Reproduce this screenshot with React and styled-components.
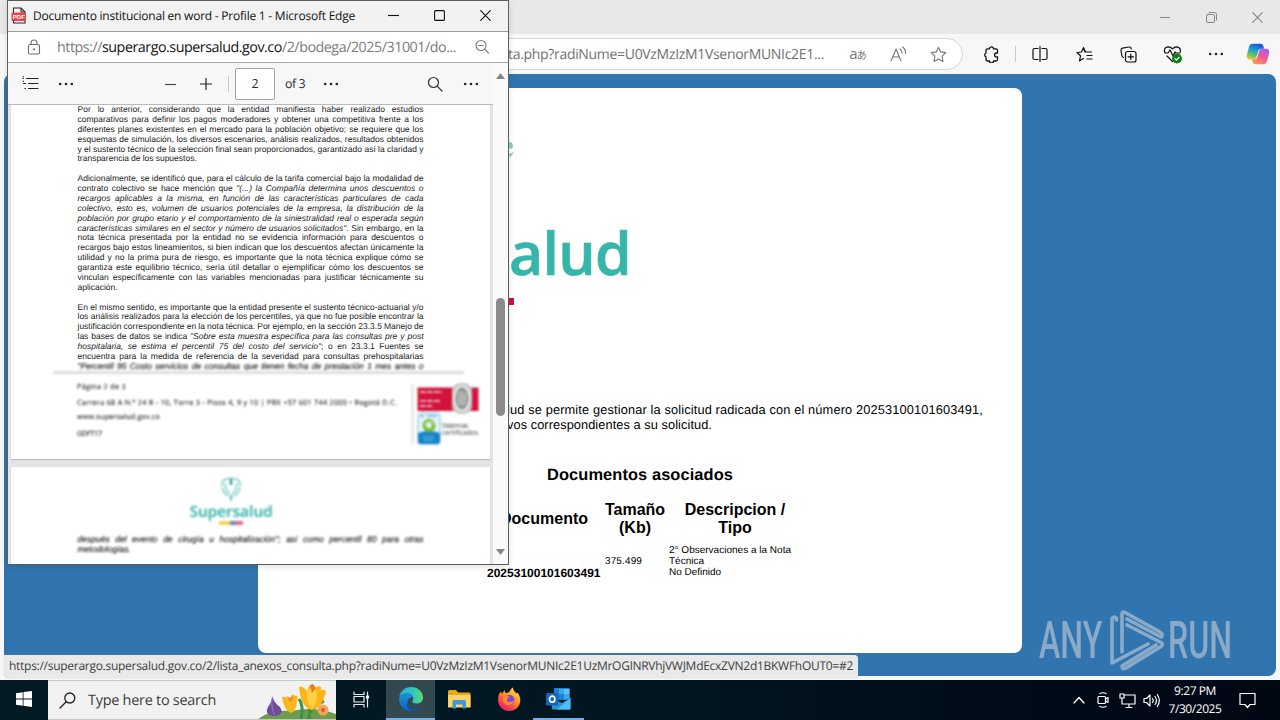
import React, { useLayoutEffect, useRef } from "react";
import styled, { createGlobalStyle } from "styled-components";

const Global = createGlobalStyle`
  * { box-sizing: border-box; }
  html, body { margin: 0; padding: 0; }
  body { width: 1280px; height: 720px; overflow: hidden; font-family: "Open Sans", "Noto Sans", sans-serif; }
  svg { display: block; flex: none; }
`;

/* Label whose tracking is adjusted so that it fills a given width */
const FitSpan = styled.span`
  display: inline-block;
  white-space: pre;
  flex: none;
  text-rendering: geometricPrecision;
`;
function Fit({ w, children, className }) {
  const ref = useRef(null);
  useLayoutEffect(() => {
    const el = ref.current;
    el.style.letterSpacing = "0px";
    const n = el.textContent.length;
    const natural = el.getBoundingClientRect().width;
    el.style.letterSpacing = `${(w - natural) / n}px`;
  }, [w]);
  return <FitSpan ref={ref} className={className}>{children}</FitSpan>;
}

const Screen = styled.div`
  position: relative;
  width: 1280px;
  height: 720px;
  display: flex;
  flex-direction: column;
  background: #f7f7f7;
  overflow: hidden;
`;

/* ---------- main browser window ---------- */
const TitleBar = styled.div`
  height: 34px;
  flex: none;
  background: #e8e8e8;
  display: flex;
  justify-content: flex-end;
`;
const WinButton = styled.div`
  width: 46px;
  height: 34px;
  display: flex;
  align-items: center;
  justify-content: center;
`;
const Toolbar = styled.div`
  height: 40px;
  flex: none;
  display: flex;
  align-items: center;
  background: #f7f7f7;
`;
const OmniBox = styled.div`
  width: 863px;
  height: 32px;
  margin: 0 6px 0 100px;
  padding: 0 4px 0 407px;
  border: 1px solid #d9d3d6;
  border-radius: 16px;
  background: #fff;
  display: flex;
  align-items: center;
  color: #717171;
  font-size: 14px;
`;
const UrlTail = styled(Fit)`
  margin-right: auto;
`;
const Slot = styled.div`
  width: ${(p) => p.$w || 44}px;
  height: 32px;
  flex: none;
  display: flex;
  align-items: center;
  justify-content: center;
`;
const Divider = styled.div`
  width: 1px;
  height: 16px;
  background: #c9c9c9;
  margin: ${(p) => p.$m || "0 2px"};
`;
const Viewport = styled.div`
  height: 602px;
  flex: none;
  margin: 0 4px 4px;
  padding: 14px 0 0 254px;
  border-radius: 8px;
  background: #3175b0;
`;
const Card = styled.div`
  width: 764px;
  height: 565px;
  border-radius: 8px;
  background: #fff;
  overflow: hidden;
  font-family: "Liberation Sans", Arial, sans-serif;
  color: #000;
  display: flex;
  flex-direction: column;
`;
const Brand = styled.div`
  height: 312px;
  padding: 48px 0 0 251px;
  filter: blur(0.7px);
`;
const BrandName = styled.div`
  margin-top: 44px;
  height: 64px;
  line-height: 64px;
  font-family: "Open Sans", sans-serif;
  font-weight: 600;
  font-size: 59px;
  color: #36b6aa;
  -webkit-text-stroke: 0.6px #36b6aa;
`;
const BrandRule = styled.div`
  width: 5px;
  height: 7px;
  margin-top: 14px;
  background: #d0103a;
`;
const Intro = styled.div`
  padding-left: 249px;
  font-size: 12.8px;
  line-height: 15px;
  height: 64px;
  margin-top: 2px;
`;
const DocsTitle = styled.div`
  padding-left: 289px;
  height: 35px;
  line-height: 17px;
  font-size: 16.4px;
  font-weight: 700;
`;
const DocsTable = styled.div`
  margin-left: 229px;
  display: grid;
  grid-template-columns: 114px 60px 132px;
  column-gap: 4px;
  row-gap: 7px;
`;
const HeadCell = styled.div`
  height: 36px;
  display: flex;
  flex-direction: column;
  justify-content: center;
  align-items: center;
  font-size: 16px;
  line-height: 18px;
  font-weight: 700;
`;
const Cell = styled.div`
  height: 34px;
  display: flex;
  flex-direction: column;
  justify-content: ${(p) => p.$at || "center"};
  align-items: flex-start;
  font-size: 10px;
  line-height: 11px;
`;
const DocLink = styled(Fit)`
  font-size: 12px;
  font-weight: 700;
  line-height: 10px;
`;

/* ---------- popup window ---------- */
const Popup = styled.div`
  position: absolute;
  left: 7px;
  top: 0;
  width: 502px;
  height: 565px;
  border: 1px solid #5d5d5d;
  background: #fff;
  display: flex;
  flex-direction: column;
  overflow: hidden;
  box-shadow: 0 2px 6px rgba(0, 0, 0, 0.12);
`;
const PopTitle = styled.div`
  height: 30px;
  flex: none;
  padding: 0 0 2px 3px;
  background: #f2f2f2;
  display: flex;
  align-items: center;
  font-size: 12px;
  color: #111;
`;
const PopLabel = styled(Fit)`
  margin: 0 auto 0 6px;
`;
const PopAddress = styled.div`
  height: 32px;
  flex: none;
  border-top: 1px solid #9a9a9a;
  border-bottom: 1px solid #a8a8a8;
  display: flex;
  align-items: center;
  padding: 0 4px;
  font-size: 14.3px;
  color: #7b7b7b;
  b { font-weight: 400; color: #111; }
`;
const PopUrl = styled(Fit)`
  margin: 0 auto 0 1px;
`;
const PopBody = styled.div`
  flex: 1;
  min-height: 0;
  display: flex;
`;
const PdfSide = styled.div`
  width: 485px;
  display: flex;
  flex-direction: column;
  background: #e4e4e4;
`;
const PdfBar = styled.div`
  height: 42px;
  flex: none;
  border-bottom: 1px solid #b9b9b9;
  background: #f7f7f7;
  display: flex;
  align-items: center;
  padding-left: 4px;
  font-size: 12.4px;
  color: #2b2b2b;
`;
const PageInput = styled.div`
  width: 40px;
  height: 32px;
  border: 1px solid #a3a3a3;
  border-radius: 2px;
  background: #fff;
  display: flex;
  align-items: center;
  justify-content: center;
  margin: 0 10px 0 6px;
`;
const Spacer = styled.div`
  width: ${(p) => p.$w}px;
  flex: none;
`;
const ScrollTrack = styled.div`
  width: 15px;
  background: #fafafa;
  display: flex;
  flex-direction: column;
  align-items: center;
  padding: 10px 0 8px;
`;
const Thumb = styled.div`
  width: 9px;
  height: 118px;
  margin: 218px 0 auto;
  border-radius: 5px;
  background: #8b8b8b;
`;
const Page = styled.div`
  width: 479px;
  height: ${(p) => p.$h}px;
  flex: none;
  margin: 0 0 ${(p) => p.$gap || 0}px 3px;
  background: #fff;
  box-shadow: 0 1px 1px #bdbdbd;
  overflow: hidden;
  font-family: "Liberation Sans", Arial, sans-serif;
  color: #1c1c1c;
`;
const Copy = styled.div`
  width: 346px;
  margin-left: 66.5px;
  font-size: 8.5px;
  word-spacing: -0.25px;
  text-rendering: geometricPrecision;
`;
const Line = styled.div`
  height: 9.88px;
  line-height: 9.88px;
  white-space: nowrap;
  text-align: justify;
  text-align-last: ${(p) => (p.$last ? "left" : "justify")};
`;
const SoftLine = styled(Line)`
  filter: blur(0.95px);
  color: #2a2a2a;
  font-style: italic;
  -webkit-text-stroke: 0.2px #2a2a2a;
`;
const FootRule = styled.div`
  width: 411px;
  height: 3px;
  margin: -1px 0 0 42px;
  background: #dedede;
  filter: blur(0.8px);
`;
const Foot = styled.div`
  display: flex;
  margin: 8px 0 0 66px;
  font-family: "Open Sans", sans-serif;
  font-size: 7.2px;
  color: #333;
`;
const FootText = styled.div`
  width: 333px;
  display: flex;
  flex-direction: column;
  filter: blur(1.2px);
  line-height: 8px;
  -webkit-text-stroke: 0.15px #333;
`;
const FootItem = styled.div`
  height: ${(p) => p.$h}px;
`;
const PdfLogo = styled.div`
  display: flex;
  flex-direction: column;
  align-items: center;
  padding: 10px 39px 0 0;
  height: 68px;
  filter: blur(1px);
`;
const PdfLogoName = styled.div`
  font-family: "Open Sans", sans-serif;
  font-weight: 700;
  font-size: 15.6px;
  line-height: 19px;
  color: #4fbdb3;
`;
const PdfLogoRule = styled.div`
  width: 24px;
  height: 4px;
  background: linear-gradient(90deg, #f4d35c 0 46%, #7a83b4 46% 72%, #dd6f93 72%);
`;

/* ---------- overlays ---------- */
const StatusBubble = styled.div`
  position: absolute;
  left: 4px;
  top: 655px;
  width: 854px;
  height: 23px;
  padding: 0 0 2px 5px;
  border-radius: 0 4px 0 5px;
  background: #e9e9ea;
  box-shadow: 0 0 1px #999;
  display: flex;
  align-items: center;
  font-size: 12px;
  color: #3e3e3e;
`;
const Watermark = styled.div`
  position: absolute;
  left: 1039px;
  top: 610px;
  height: 62px;
  display: flex;
  align-items: center;
  opacity: 0.68;
`;
const WatermarkWord = styled.div`
  width: ${(p) => p.$w}px;
  font-family: Roboto, sans-serif;
  font-weight: 500;
  font-size: 51px;
  line-height: 62px;
  color: #b4c3d2;
  white-space: nowrap;
  transform: scaleX(${(p) => p.$squeeze});
  transform-origin: 0 50%;
`;

/* ---------- taskbar ---------- */
const Taskbar = styled.div`
  height: 40px;
  flex: none;
  display: flex;
  align-items: stretch;
  background: linear-gradient(90deg, #021a24, #011620 50%, #000a16 85%, #000814);
  color: #fff;
`;
const TaskCell = styled.div`
  width: ${(p) => p.$w || 49}px;
  display: flex;
  align-items: center;
  justify-content: center;
  background: ${(p) => (p.$active ? "#34484f" : "transparent")};
  border-bottom: 2px solid ${(p) => (p.$run ? "#76b0e6" : "transparent")};
`;
const SearchBox = styled.div`
  width: 288px;
  background: #f2f2f2;
  border: 1px solid #c2c6c8;
  border-width: 1px 0;
  display: flex;
  align-items: center;
  padding-left: 11px;
  color: #3d3d3d;
  font-size: 14.4px;
`;
const SearchLabel = styled(Fit)`
  margin: 0 auto 0 12px;
`;
const Tray = styled.div`
  margin-left: auto;
  display: flex;
  align-items: center;
`;
const Clock = styled.div`
  width: 66px;
  padding-right: 2px;
  display: flex;
  flex-direction: column;
  align-items: center;
  font-size: 12px;
  line-height: 18px;
`;

/* ---------- icons ---------- */
const Ico = ({ s = 16, vb = 16, c = "#222", sw = 1.1, children }) => (
  <svg width={s} height={s} viewBox={`0 0 ${vb} ${vb}`} fill="none" stroke={c} strokeWidth={sw} strokeLinecap="round" strokeLinejoin="round">
    {children}
  </svg>
);
const Dots = () => (
  <svg width="16" height="4" viewBox="0 0 16 4" fill="#222">
    <circle cx="2.2" cy="2" r="1.3" /><circle cx="8" cy="2" r="1.3" /><circle cx="13.8" cy="2" r="1.3" />
  </svg>
);
const Minus = ({ c = "#777", w = 10 }) => (
  <svg width={w} height="10"><path d={`M0 5.5H${w}`} stroke={c} strokeWidth="1.1" /></svg>
);
const Cross = ({ c }) => (
  <Ico s={11} vb={11} c={c} sw={1.1}><path d="M.7.7l9.6 9.6M10.3.7L.7 10.3" /></Ico>
);
const STAR = "M8.5 1.2l2.2 4.7 5.1.7-3.7 3.6.9 5.2-4.5-2.5L4 15.4l.9-5.2L1.2 6.6l5.1-.7z";
const Copilot = () => (
  <svg width="24" height="22" viewBox="0 0 24 22">
    <defs>
      <linearGradient id="cpa" x1="0.6" y1="0" x2="0.2" y2="1">
        <stop offset="0" stopColor="#1c52d8" /><stop offset=".35" stopColor="#1598da" /><stop offset=".7" stopColor="#5cc46a" /><stop offset="1" stopColor="#ffc52b" />
      </linearGradient>
      <linearGradient id="cpb" x1="0.8" y1="0" x2="0.2" y2="1">
        <stop offset="0" stopColor="#a95cf0" /><stop offset=".5" stopColor="#ee5a9a" /><stop offset="1" stopColor="#ff9a45" />
      </linearGradient>
    </defs>
    <path d="M7 .8h7.6c1.6 0 2.3 1 2.8 2.5l.8 2.4h-2.6c-2 0-2.9.8-3.5 2.8l-1.7 5.6c-.5 1.6-1.4 2.4-3 2.4H4C1 16.500.2 14 1 11.200L3 4C3.600 1.800 4.800.8 7 .8z" fill="url(#cpa)" />
    <path d="M17 21.200H9.400c-1.600 0-2.300-1-2.800-2.500l-.8-2.200h2.200c2 0 2.900-1 3.500-2.900l1.700-5.500c.5-1.600 1.400-2.400 3-2.400H20c3 0 3.800 2.300 3 5.100L21 18c-.6 2.200-1.800 3.200-4 3.200z" fill="url(#cpb)" />
  </svg>
);
const PdfFile = () => (
  <svg width="16" height="17" viewBox="0 0 16 17">
    <path d="M2.500 1h7.500l4 4v11H2.500z" fill="#fff" stroke="#222" strokeWidth="1.100" />
    <path d="M10 1v4h4" fill="none" stroke="#222" strokeWidth="1.100" />
    <rect x="0.500" y="5.500" width="14.500" height="8.500" rx="1" fill="#e8434a" />
    <text x="1.800" y="12" fontSize="6" fontWeight="700" fontFamily="Liberation Sans" fill="#fff" textLength="12">PDF</text>
  </svg>
);
const SoftSvg = styled.svg`
  filter: blur(0.8px);
`;
const Certificates = () => (
  <SoftSvg width="70" height="64" viewBox="0 0 70 64">
    <rect x="1" y="2" width="3" height="60" fill="#e9e9e9" />
    <rect x="7.500" y="5.500" width="61" height="23.500" fill="#d2143c" />
    <path d="M10 10h22M10 19h20M10 24h12" stroke="#f0a3b3" strokeWidth="2" strokeDasharray="6 1" />
    <rect x="42" y="1" width="20" height="31" rx="8" fill="#c9cbc8" />
    <ellipse cx="52" cy="16.500" rx="7.500" ry="12" fill="#8d938f" stroke="#f4f4f4" strokeWidth="1.600" />
    <path d="M49 10v13M52 9v15M55 11v12" stroke="#dfe3e0" strokeWidth="1.200" />
    <rect x="8" y="31" width="22" height="31" rx="2.500" fill="#e6f4fb" stroke="#76bde5" />
    <path d="M8 51q11-4 22 0v8.500q0 2.500-2.500 2.500h-17q-2.500 0-2.500-2.500z" fill="#1684c8" />
    <path d="M13 55h11M14 58h9" stroke="#7bc3e8" />
    <path d="M10 34h4M17 34h10" stroke="#5db3e3" strokeWidth="1.400" />
    <circle cx="19" cy="43.500" r="4.600" fill="none" stroke="#7cbd2c" strokeWidth="3.800" />
    <path d="M15 43q5-6 9-1" fill="none" stroke="#e6f4fb" strokeWidth="1.200" />
    <text x="32" y="46" fontSize="6.500" fill="#333" fontFamily="Open Sans" textLength="26">Sistemas</text>
    <text x="32" y="53" fontSize="6.500" fill="#333" fontFamily="Open Sans" textLength="36">certificados</text>
  </SoftSvg>
);
const Emblem = () => (
  <svg width="22" height="25" viewBox="0 0 22 25" fill="none" stroke="#86d0c9" strokeWidth="1.600">
    <path d="M2 9Q1 2 8 1.500M14 1.500Q21 2 20 9M2 10Q3 16 8 19M20 10Q19 16 14 19M5 6q1 9 5 11M17 6q-1 9-5 11" fill="#e0f3f0" />
    <path d="M6 2.500Q11 0 16 2.500" />
    <path d="M11 2v6" stroke="#2f978e" strokeWidth="2.400" />
    <path d="M11 18v6M9.500 20h3" stroke="#58b8af" />
  </svg>
);
const Flowers = () => (
  <svg width="78" height="37" viewBox="0 0 78 37">
    <path d="M0 37Q12 27 34 29Q56 24 78 32V37z" fill="#6e9c4d" />
    <path d="M43 37Q46 24 41 17M52 37Q50 28 54 17M50 37Q52 26 66 19" stroke="#3c9143" strokeWidth="3" fill="none" />
    <path d="M14 14Q14 20 10 25Q6 33 16 34Q27 33 22 25Q16 21 14 14z" fill="#6c4c9c" />
    <path d="M14 17Q13 27 17 33" stroke="#9a7bc4" fill="none" />
    <path d="M24 15Q28 14 32 17Q34 10 37 14Q41 12 39 20Q38 30 33 31Q26 29 24 15z" fill="#f8b820" />
    <path d="M41 5Q44 3 49 9Q52-2 57 6Q64 1 63 8Q70 7 67 13Q64 26 54 28Q43 26 41 5z" fill="#fbb517" />
    <path d="M49 8Q48 20 54 27Q62 18 57 6" fill="#fdd247" />
    <path d="M52 3l3-1 3 4-4 5z" fill="#ee7820" />
    <path d="M29 14l3 2 3-2-1 5h-3z" fill="#f08820" />
    <circle cx="65" cy="28" r="5.500" fill="#f3a35a" /><circle cx="65" cy="28" r="2" fill="#e05b25" />
  </svg>
);
const EdgeIcon = () => (
  <svg width="26" height="26" viewBox="0 0 26 26">
    <defs>
      <linearGradient id="ea" x1="0" y1="0.300" x2="1" y2="0.300"><stop offset="0" stopColor="#2aa7e6" /><stop offset=".6" stopColor="#30c8c0" /><stop offset="1" stopColor="#62dc68" /></linearGradient>
      <linearGradient id="eb" x1="0" y1="0" x2="0" y2="1"><stop offset="0" stopColor="#1b8fdc" /><stop offset="1" stopColor="#1462b8" /></linearGradient>
    </defs>
    <path d="M1.200 11C2.400 5 7.200 1 13 1c7 0 12 5 12 10.500 0 4-3 6-6.500 6-3 0-4.600-1-4.200-2.200.4-1 .9-1.600.9-3C15 9.500 12.500 7.500 9 7.500S2.800 9 1.200 11z" fill="url(#ea)" />
    <path d="M1 13c0-3 3.500-5.500 8-5.500 3 0 5.600 1.600 6 4.200-1.200-1-5.500.300-5.500 4.500 0 4.500 4.500 7.500 9.500 6.300-2 1.700-4 2.500-6.300 2.500C6 25 1 19.600 1 13z" fill="url(#eb)" />
    <path d="M9.500 16c0 4.800 5 8 10.300 5.600 1.700-.8 3 .200 2 1.200C19 25.500 14 26 10.500 23 8 21 8.300 18 9.500 16z" fill="#145098" />
  </svg>
);
const FolderIcon = () => (
  <svg width="23" height="20" viewBox="0 0 23 20">
    <path d="M0 2.500Q0 1 1.500 1H8l2 2.500h11.500Q22.500 3.500 22.500 5V18H0z" fill="#e8a824" />
    <path d="M0 6h22.500v12.500H0z" fill="#fbd466" />
    <path d="M4.500 19.500v-7q0-1.500 1.500-1.500h10.500q1.500 0 1.500 1.500v7h-3.500v-4h-6.500v4z" fill="#3f97d4" />
  </svg>
);
const FirefoxIcon = () => (
  <svg width="24" height="25" viewBox="0 0 24 25">
    <defs>
      <linearGradient id="ff" x1="0.800" y1="0" x2="0.200" y2="1"><stop offset="0" stopColor="#ffe23c" /><stop offset=".4" stopColor="#ff9a22" /><stop offset=".75" stopColor="#fb3d4e" /><stop offset="1" stopColor="#dd1480" /></linearGradient>
    </defs>
    <path d="M1 13C1 9 2 6.500 4 4.500l1 2.500 2.500-4 1 3c2 0 3.500-.5 4.500-2C13.500 2.500 14.500 1 16 .5c0 3 2 4 3.500 6l1-1C22.500 8 23.300 10.500 23.300 13 23.300 19.500 18.500 24 12 24S1 19 1 13z" fill="url(#ff)" />
    <circle cx="12.500" cy="13" r="5" fill="#7a48dc" />
    <path d="M6 9.500c3-1.500 5-.5 7 .5-2 .5-3 1.500-3 3 0 2 4 3 7 .5-.5 5-9 6.500-11 1z" fill="#fb8a2b" />
  </svg>
);
const OutlookIcon = () => (
  <svg width="25" height="22" viewBox="0 0 25 22">
    <path d="M8 0h14.500q1 0 1 1v11H8z" fill="#1f7fd0" />
    <path d="M13 1h5v5h-5zM18 6h5.500v5H18z" fill="#38a8ec" /><path d="M18 1h5.500v5H18z" fill="#56c2f8" />
    <path d="M6 10l10 5 8.500-5v10.500q0 1-1 1H7q-1 0-1-1z" fill="#2a94dc" />
    <path d="M24.500 10L11 21.500h12.500q1 0 1-1z" fill="#50bdf2" />
    <rect x="0" y="5" width="12.500" height="12.500" rx="1" fill="#0f66bd" />
    <ellipse cx="6.200" cy="11.200" rx="2.700" ry="3" fill="none" stroke="#fff" strokeWidth="1.700" />
  </svg>
);

const PARA = [
  ["Por lo anterior, considerando que la entidad manifiesta haber realizado estudios"],
  ["comparativos para definir los pagos moderadores y obtener una competitiva frente a los"],
  ["diferentes planes existentes en el mercado para la población objetivo; se requiere que los"],
  ["esquemas de simulación, los diversos escenarios, análisis realizados, resultados obtenidos"],
  ["y el sustento técnico de la selección final sean proporcionados, garantizado así la claridad y"],
  ["transparencia de los supuestos.", 1],
  ["\u00a0", 1],
  ["Adicionalmente, se identificó que, para el cálculo de la tarifa comercial bajo la modalidad de"],
  [<>contrato colectivo se hace mención que <i>"(...) la Compañía determina unos descuentos o</i></>],
  [<i>recargos aplicables a la misma, en función de las características particulares de cada</i>],
  [<i>colectivo, esto es, volumen de usuarios potenciales de la empresa, la distribución de la</i>],
  [<i>población por grupo etario y el comportamiento de la siniestralidad real o esperada según</i>],
  [<><i>características similares en el sector y número de usuarios solicitados"</i>. Sin embargo, en la</>],
  ["nota técnica presentada por la entidad no se evidencia información para descuentos o"],
  ["recargos bajo estos lineamientos, si bien indican que los descuentos afectan únicamente la"],
  ["utilidad y no la prima pura de riesgo, es importante que la nota técnica explique cómo se"],
  ["garantiza este equilibrio técnico, sería útil detallar o ejemplificar cómo los descuentos se"],
  ["vinculan específicamente con las variables mencionadas para justificar técnicamente su"],
  ["aplicación.", 1],
  ["\u00a0", 1],
  ["En el mismo sentido, es importante que la entidad presente el sustento técnico-actuarial y/o"],
  ["los análisis realizados para la elección de los percentiles, ya que no fue posible encontrar la"],
  ["justificación correspondiente en la nota técnica. Por ejemplo, en la sección 23.3.5 Manejo de"],
  [<>las bases de datos se indica <i>"Sobre esta muestra específica para las consultas pre y post</i></>],
  [<><i>hospitalaria, se estima el percentil 75 del costo del servicio"</i>; o en 23.3.1 Fuentes se</>],
  ["encuentra para la medida de referencia de la severidad para consultas prehospitalarias"],
];

const TranslateGlyph = styled.span`
  font-size: 15px;
  line-height: 18px;
  color: #777;
  small { font-family: "Noto Sans CJK JP", sans-serif; font-size: 10px; margin-left: -1px; }
`;

function MainWindow() {
  return (
    <>
      <TitleBar>
        <WinButton><Minus c="#8a8a8a" /></WinButton>
        <WinButton>
          <Ico s={11} vb={11} c="#858585" sw={1}><rect x="0.500" y="2.500" width="8" height="8" rx="1.500" /><path d="M3 .5h5.500q2 0 2 2V8" /></Ico>
        </WinButton>
        <WinButton><Cross c="#858585" /></WinButton>
      </TitleBar>
      <Toolbar>
        <OmniBox>
          <UrlTail w={316}>ta.php?radiNume=U0VzMzIzM1VsenorMUNIc2E1...</UrlTail>
          <Slot $w={40}><TranslateGlyph>a<small>あ</small></TranslateGlyph></Slot>
          <Slot $w={40}>
            <Ico s={17} vb={17} c="#777"><path d="M1 15L6 3l5 12M2.800 11h6.500M10 3q2 1.500 2 4M12.500 1q3.500 2.500 3 6.500" /></Ico>
          </Slot>
          <Slot $w={40}><Ico s={17} vb={17} c="#777"><path d={STAR} /></Ico></Slot>
        </OmniBox>
        <Slot>
          <Ico s={17} vb={17} c="#111" sw={1.300}>
            <path d="M4.500 2.800h2a2 2 0 0 1 4 0H13q1.500 0 1.500 1.500V7h-1a1.900 1.900 0 0 0 0 3.800h1v2.700q0 1.500-1.500 1.500h-2.500a2 2 0 0 1-4 0h-2Q3 15 3 13.500v-2.700a2 2 0 0 1 0-3.800V4.300Q3 2.800 4.500 2.800z" />
          </Ico>
        </Slot>
        <Divider />
        <Slot>
          <Ico s={16} c="#111" sw={1.200}><path d="M6 2.500H2.500Q1 2.500 1 4v8q0 1.500 1.500 1.500H6M10 2.500h3.500Q15 2.500 15 4v8q0 1.500-1.500 1.500H10M8 .5v15" /></Ico>
        </Slot>
        <Slot>
          <Ico s={17} vb={17} c="#111" sw={1.200}><path d="M9 6L7.500 1.500 5.500 6 1 6.500l3.500 3.300-1 5L7.500 12.500M7.500 1.500L9.500 6h6M11 9.500h5M11 13h5" /></Ico>
        </Slot>
        <Slot>
          <Ico s={17} vb={17} c="#111" sw={1.200}><rect x="5.500" y="5.500" width="10.500" height="10.500" rx="2" /><path d="M10.800 8v5.500M8 10.800h5.500M3.500 11.500Q2 11 1.800 9.500L1 4.500Q.8 2.500 2.500 2.200L9 1q2-.2 2.300 1.800" /></Ico>
        </Slot>
        <Slot>
          <Ico s={19} vb={19} c="#111" sw={1.200}>
            <path d="M2 8Q0 2.500 5 1.800q3 0 4.500 2.200Q11 1.800 14 1.800q4 .7 3.300 5M2 8h3l2-3 3 6 2-4 1 1h4M4 11l5.500 5.500" />
            <circle cx="14" cy="13.500" r="4.300" fill="#0f7b18" stroke="#0f7b18" /><path d="M12 13.700l1.400 1.400 2.600-2.800" stroke="#fff" />
          </Ico>
        </Slot>
        <Slot><Dots /></Slot>
        <Slot $w={40}><Copilot /></Slot>
      </Toolbar>
      <Viewport>
        <Card>
          <Brand>
            <svg width="10" height="40" viewBox="0 0 10 40"><path d="M0 6q4 0 4 4t-4 2zM0 18l5-2-4 6z" fill="#8acfc7" /></svg>
            <BrandName><Fit w={122}>alud</Fit></BrandName>
            <BrandRule />
          </Brand>
          <Intro>
            <Fit w={476}>lud se permite gestionar la solicitud radicada con el número 20253100101603491,</Fit><br />
            <Fit w={205}>vos correspondientes a su solicitud.</Fit>
          </Intro>
          <DocsTitle><Fit w={186}>Documentos asociados</Fit></DocsTitle>
          <DocsTable>
            <HeadCell><span>Documento</span></HeadCell>
            <HeadCell><span>Tamaño</span><span>(Kb)</span></HeadCell>
            <HeadCell><span>Descripcion /</span><span>Tipo</span></HeadCell>
            <Cell $at="flex-end"><DocLink w={113.5}>20253100101603491</DocLink></Cell>
            <Cell><Fit w={37}>375.499</Fit></Cell>
            <Cell><Fit w={122}>2° Observaciones a la Nota</Fit><Fit w={35}>Técnica</Fit><Fit w={52}>No Definido</Fit></Cell>
          </DocsTable>
        </Card>
      </Viewport>
    </>
  );
}

function PopupWindow() {
  return (
    <Popup>
      <PopTitle>
        <PdfFile />
        <PopLabel w={322}>Documento institucional en word - Profile 1 - Microsoft Edge</PopLabel>
        <WinButton><Minus c="#111" w={11} /></WinButton>
        <WinButton><Ico s={11} vb={11} c="#111" sw={1.100}><rect x="0.600" y="0.600" width="9.800" height="9.800" rx="1" /></Ico></WinButton>
        <WinButton><Cross c="#111" /></WinButton>
      </PopTitle>
      <PopAddress>
        <Slot><Ico s={16} c="#6e6e6e" sw={1.100}><rect x="2.500" y="5.500" width="11" height="9.500" rx="1.500" /><path d="M5 5.500V4a3 3 0 0 1 6 0v1.500" /><circle cx="8" cy="10.300" r=".5" /></Ico></Slot>
        <PopUrl w={399}>https://<b>superargo.supersalud.gov.co</b>/2/bodega/2025/31001/do...</PopUrl>
        <Slot><Ico s={16} c="#777"><circle cx="7" cy="6.500" r="5" /><path d="M10.700 10.200L14.500 14M4.800 6.500h4.400" /></Ico></Slot>
      </PopAddress>
      <PopBody>
        <PdfSide>
          <PdfBar>
            <Slot $w={36}><Ico s={17} vb={17} c="#222" sw={1.200}><path d="M4.500 3.500H16M6.500 8.500H16M6.500 13.500H16M.8 3.500h.5M1.500 8.500h2M3 13.500h.5M1.300 1.500v.3M1.300 6v.3" /></Ico></Slot>
            <Slot $w={36}><Dots /></Slot>
            <Spacer $w={68} />
            <Slot $w={36}><Minus c="#444" w={11} /></Slot>
            <Slot $w={36}><Ico s={12} vb={12} c="#222" sw={1.200}><path d="M6 .5v11M.5 6h11" /></Ico></Slot>
            <Divider $m="0 0 0 4px" />
            <PageInput>2</PageInput>
            <Fit w={20}>of 3</Fit>
            <Spacer $w={8} />
            <Slot $w={36}><Dots /></Slot>
            <Spacer $w={68} />
            <Slot $w={36}><Ico s={16} c="#333" sw={1.200}><circle cx="6.500" cy="6.500" r="5" /><path d="M10.200 10.200L15 15" /></Ico></Slot>
            <Slot $w={36}><Dots /></Slot>
          </PdfBar>
          <Page $h={354} $gap={8}>
            <Copy>
              {PARA.map(([t, last], i) => <Line key={i} $last={last}>{t}</Line>)}
              <SoftLine>"Percentil 95 Costo servicios de consultas que tienen fecha de prestación 1 mes antes o</SoftLine>
            </Copy>
            <FootRule />
            <Foot>
              <FootText>
                <FootItem $h={16}><Fit w={49}>Página 2 de 3</Fit></FootItem>
                <FootItem $h={14}><Fit w={320}>Carrera 68 A N.º 24 B - 10, Torre 3 - Pisos 4, 9 y 10 | PBX +57 601 744 2000 • Bogotá D.C.</Fit></FootItem>
                <FootItem $h={17}><Fit w={83}>www.supersalud.gov.co</Fit></FootItem>
                <FootItem $h={10}><Fit w={25}>GDFT17</Fit></FootItem>
              </FootText>
              <Certificates />
            </Foot>
          </Page>
          <Page $h={98}>
            <PdfLogo>
              <Emblem />
              <PdfLogoName><Fit w={83}>Supersalud</Fit></PdfLogoName>
              <PdfLogoRule />
            </PdfLogo>
            <Copy>
              <SoftLine>después del evento de cirugía u hospitalización"; así como percentil 80 para otras</SoftLine>
              <SoftLine $last>metodologías.</SoftLine>
            </Copy>
          </Page>
        </PdfSide>
        <ScrollTrack>
          <svg width="9" height="7"><path d="M0 6h9L4.500 0z" fill="#858585" /></svg>
          <Thumb />
          <svg width="9" height="7"><path d="M0 0h9L4.500 6z" fill="#858585" /></svg>
        </ScrollTrack>
      </PopBody>
    </Popup>
  );
}

function AnyRun() {
  return (
    <Watermark>
      <WatermarkWord $w={69} $squeeze={0.63}>ANY</WatermarkWord>
      <svg width="60" height="62" viewBox="1108 610 60 62" fill="none" stroke="#b4c3d2" strokeWidth="3.600" strokeLinecap="round" strokeLinejoin="round">
        <path d="M1116.500 620v-1.500q-2-3-4.500 0V663l36-19" />
        <path d="M1122 652V614q0-3 3-1.500L1160 632q4 2.500 1 5L1127 619" />
        <path d="M1127 625L1161 642.500q3 1.500 0 4L1126 668q-4 2-4-2l34-21" />
      </svg>
      <WatermarkWord $w={64} $squeeze={0.63}>RUN</WatermarkWord>
    </Watermark>
  );
}

function Bar() {
  return (
    <Taskbar>
      <TaskCell $w={48}>
        <svg width="16" height="16" viewBox="0 0 16 16" fill="#fff"><path d="M0 2.200l6.700-1v6.300H0zM7.500 1.100L16 0v7.500H7.500zM0 8.400h6.700v6.300L0 13.800zM7.500 8.400H16V16l-8.500-1.200z" /></svg>
      </TaskCell>
      <SearchBox>
        <Ico s={17} vb={17} c="#222" sw={1.300}><circle cx="10.800" cy="6" r="5" /><path d="M7.200 9.700L1 16" /></Ico>
        <SearchLabel w={128}>Type here to search</SearchLabel>
        <Flowers />
      </SearchBox>
      <TaskCell $w={50}>
        <Ico s={17} vb={17} c="#e8eef0" sw={1.200}><path d="M1 1v2.500h10V1M1 16v-2.500h10V16M14.500 1v15" /><rect x="1" y="5.500" width="10" height="5.500" /><rect x="13.500" y="5" width="2" height="2" fill="#fff" /></Ico>
      </TaskCell>
      <TaskCell $w={49} $active $run><EdgeIcon /></TaskCell>
      <TaskCell><FolderIcon /></TaskCell>
      <TaskCell><FirefoxIcon /></TaskCell>
      <TaskCell $w={51} $run><OutlookIcon /></TaskCell>
      <Tray>
        <Slot $w={24}><Ico s={12} vb={12} c="#fff" sw={1.300}><path d="M1 9l5-5.500L11 9" /></Ico></Slot>
        <Slot $w={24}><Ico s={16} c="#fff" sw={1.200}><rect x="3" y="4.500" width="7.500" height="7" rx="1" /><path d="M10.500 7l2.500-1.500v5L10.500 9M5 1.500q3-1.500 6 0M5 14.500q3 1.500 6 0" /></Ico></Slot>
        <Slot $w={24}><Ico s={17} vb={17} c="#fff" sw={1.200}><path d="M6 3h10v9H4M10 12v3M7 15.500h6M1 2h4v4H1zM3 6v6h1" /></Ico></Slot>
        <Slot $w={24}><Ico s={17} vb={17} c="#fff" sw={1.200}><path d="M1 6.500h2.500L7 3v11l-3.500-3.500H1zM9.500 6.500q1.500 2 0 4M12 4.500q3 4 0 8M14.300 2.500q4 6 0 12" /></Ico></Slot>
        <Clock><Fit w={42}>9:27 PM</Fit><Fit w={53}>7/30/2025</Fit></Clock>
        <Slot $w={36}><Ico s={17} vb={17} c="#fff" sw={1.200}><path d="M1 1.500h15v11h-5L8.500 15.500 6 12.500H1z" /></Ico></Slot>
        <Spacer $w={15} />
      </Tray>
    </Taskbar>
  );
}

export default function App() {
  return (
    <Screen>
      <Global />
      <MainWindow />
      <Bar />
      <AnyRun />
      <StatusBubble>
        <Fit w={844}>https://superargo.supersalud.gov.co/2/lista_anexos_consulta.php?radiNume=U0VzMzIzM1VsenorMUNIc2E1UzMrOGlNRVhjVWJMdEcxZVN2d1BKWFhOUT0=#2</Fit>
      </StatusBubble>
      <PopupWindow />
    </Screen>
  );
}
